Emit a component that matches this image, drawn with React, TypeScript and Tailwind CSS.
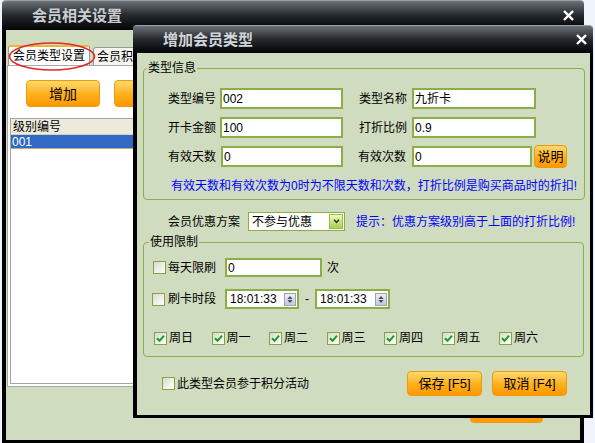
import React from 'react';

const weekDays = ['周日', '周一', '周二', '周三', '周四', '周五', '周六'];

function CloseIcon() {
  return (
    <svg viewBox="0 0 12 12" className="h-[11px] w-[11px]">
      <path d="M2 2 L10 10 M10 2 L2 10" stroke="#ffffff" strokeWidth="2.6" strokeLinecap="square" />
    </svg>
  );
}

function CheckBox({ checked }: { checked?: boolean }) {
  return (
    <span className="flex h-[13px] w-[13px] shrink-0 items-center justify-center border border-[#83a63c] bg-gradient-to-br from-[#d9d9d2] to-white">
      {checked && (
        <svg viewBox="0 0 9 9" className="h-[9px] w-[9px]">
          <path d="M1 4.2 L3.6 6.8 L8 1.6" stroke="#1f9a26" strokeWidth="2" fill="none" />
        </svg>
      )}
    </span>
  );
}

function TextBox({ value, className }: { value: string; className: string }) {
  return (
    <div className={`flex items-center border-2 border-[#8cae45] bg-white pl-[1px] ${className}`}>
      {value}
    </div>
  );
}

function TimeBox({ value, className }: { value: string; className: string }) {
  return (
    <div className={`flex h-[20px] items-center justify-between border-2 border-[#8cae45] bg-white pl-[3px] pr-[1px] ${className}`}>
      <span>{value}</span>
      <span className="flex h-[13px] w-[12px] flex-col items-center justify-center gap-[1px] border border-[#9ea0b4] bg-gradient-to-b from-[#eceef8] to-[#c4c8dc]">
        <svg viewBox="0 0 7 4" className="h-[3px] w-[6px]"><path d="M0 4 L3.5 0 L7 4 Z" fill="#4a4c5c" /></svg>
        <svg viewBox="0 0 7 4" className="h-[3px] w-[6px]"><path d="M0 0 L3.5 4 L7 0 Z" fill="#4a4c5c" /></svg>
      </span>
    </div>
  );
}

function OrangeButton({ children, className }: { children: React.ReactNode; className: string }) {
  return (
    <div className={`flex items-center justify-center rounded-[4px] border border-[#eb9c08] bg-gradient-to-b from-[#ffd96a] via-[#ffb21a] to-[#ff9700] text-black ${className}`}>
      {children}
    </div>
  );
}

export default function App() {
  return (
    <div className="relative h-[443px] w-[595px] overflow-hidden bg-[#eef4fa] font-['Liberation_Sans','Noto_Sans_CJK_SC',sans-serif] text-[12px] leading-[14px] text-black">
      {/* Outer window */}
      <div className="ml-[2px] flex h-[443px] w-[582px] flex-col">
        <div className="flex h-[30px] shrink-0 items-center justify-between rounded-t-[4px] border-t border-[#9aa0a6] bg-gradient-to-b from-[#6d7278] via-[#25292e] to-[#040506] pl-[30px] pr-[10px]">
          <span className="text-[15px] font-bold text-[#c9cdd1]">会员相关设置</span>
          <CloseIcon />
        </div>
        <div className="flex flex-1 flex-col border-x-4 border-b-[3px] border-black bg-[#d0dcbf] pt-[15px]">
          {/* tabs */}
          <div className="flex h-[20px] items-end pl-[2px]">
            <div className="flex h-[20px] items-center rounded-t-[3px] border border-b-0 border-[#919b9c] border-t-2 border-t-[#f2b233] bg-white px-[4px]">
              会员类型设置
            </div>
            <div className="ml-[3px] flex h-[18px] items-center rounded-t-[3px] border border-b-0 border-[#919b9c] bg-[#f6f5ef] px-[3px]">
              会员积分设置
            </div>
          </div>
          <div className="ml-[1px] flex h-[322px] flex-col border border-[#a8a8a8] bg-white pt-[14px]">
            <div className="flex gap-[14px] pl-[18px]">
              <OrangeButton className="h-[27px] w-[74px] text-[14px]">增加</OrangeButton>
              <OrangeButton className="h-[27px] w-[74px] text-[14px]">修改</OrangeButton>
            </div>
            <div className="mx-[2px] mb-[2px] mt-[11px] flex flex-1 flex-col border border-[#a5a5a5]">
              <div className="flex h-[16px] items-center border-b border-[#d6d2c2] bg-[#ebeadb] pl-[2px]">级别编号</div>
              <div className="flex h-[14px] items-center border-b border-[#c8a878] bg-[#316ac5] pl-[1px] text-white">001</div>
            </div>
          </div>
          <div className="mt-[11px] flex pl-[464px]">
            <OrangeButton className="h-[25px] w-[73px]">关闭</OrangeButton>
          </div>
        </div>
      </div>

      {/* red annotation ring */}
      <svg className="absolute left-[8px] top-[41px] h-[31px] w-[88px]" viewBox="0 0 88 31">
        <ellipse cx="44" cy="15.5" rx="42.5" ry="13.5" fill="none" stroke="#e0282c" strokeWidth="1.6" />
      </svg>

      {/* Dialog */}
      <div className="absolute left-[133px] top-[25px] flex h-[393px] w-[460px] flex-col">
        <div className="flex h-[28px] shrink-0 items-center justify-between rounded-t-[4px] border-t border-[#9aa0a6] bg-gradient-to-b from-[#6d7278] via-[#25292e] to-[#040506] pl-[30px] pr-[6px]">
          <span className="text-[15px] font-bold text-[#d2d6da]">增加会员类型</span>
          <CloseIcon />
        </div>
        <div className="flex flex-1 flex-col border-b-[3px] border-l-4 border-r-[3px] border-black bg-[#d0dcbf] pt-[7px]">
          <fieldset className="ml-[6px] mr-[5px] rounded-[4px] border border-[#8bb04a] pb-[6px]">
            <legend className="ml-[3px] px-[1px] leading-[16px]">类型信息</legend>
            <div className="mt-[12px] flex flex-col gap-[8px] pl-[24px]">
              <div className="flex h-[21px] items-center">
                <span className="w-[48px]">类型编号</span>
                <TextBox value="002" className="ml-[4px] h-[21px] w-[123px]" />
                <span className="ml-[16px] w-[48px]">类型名称</span>
                <TextBox value="九折卡" className="ml-[5px] h-[21px] w-[124px]" />
              </div>
              <div className="flex h-[21px] items-center">
                <span className="w-[48px]">开卡金额</span>
                <TextBox value="100" className="ml-[4px] h-[21px] w-[123px]" />
                <span className="ml-[16px] w-[48px]">打折比例</span>
                <TextBox value="0.9" className="ml-[5px] h-[21px] w-[124px]" />
              </div>
              <div className="flex h-[21px] items-center">
                <span className="w-[48px]">有效天数</span>
                <TextBox value="0" className="ml-[5px] h-[21px] w-[122px]" />
                <span className="ml-[15px] w-[48px]">有效次数</span>
                <TextBox value="0" className="ml-[6px] h-[21px] w-[120px]" />
                <OrangeButton className="ml-[2px] h-[23px] w-[33px] text-[13px]">说明</OrangeButton>
              </div>
            </div>
            <div className="mt-[12px] pl-[27px] text-[#0000ff]">
              有效天数和有效次数为0时为不限天数和次数，打折比例是购买商品时的折扣!
            </div>
          </fieldset>

          <div className="mt-[12px] flex h-[19px] items-center pl-[31px]">
            <span>会员优惠方案</span>
            <div className="ml-[8px] flex h-[19px] w-[97px] items-center justify-between border border-[#8cae45] bg-white pl-[3px] pr-[1px]">
              <span>不参与优惠</span>
              <span className="flex h-[15px] w-[14px] items-center justify-center border border-[#9cc04a] bg-gradient-to-b from-[#eefac0] to-[#a6d04a]">
                <svg viewBox="0 0 8 6" className="h-[5px] w-[7px]">
                  <path d="M1 1 L4 4 L7 1" stroke="#2d3a18" strokeWidth="1.8" fill="none" />
                </svg>
              </span>
            </div>
            <span className="ml-[11px] text-[#0000ff]">提示：优惠方案级别高于上面的打折比例!</span>
          </div>

          <fieldset className="ml-[6px] mr-[6px] mt-[3px] rounded-[4px] border border-[#8bb04a] pb-[11px]">
            <legend className="ml-[5px] px-[1px] leading-[16px]">使用限制</legend>
            <div className="mt-[8px] flex h-[19px] items-center pl-[9px]">
              <CheckBox />
              <span className="ml-[2px] w-[48px]">每天限刷</span>
              <TextBox value="0" className="ml-[9px] h-[19px] w-[97px]" />
              <span className="ml-[5px]">次</span>
            </div>
            <div className="mt-[12px] flex h-[20px] items-center pl-[8px]">
              <CheckBox />
              <span className="ml-[3px] w-[48px]">刷卡时段</span>
              <TimeBox value="18:01:33" className="ml-[9px] w-[74px]" />
              <span className="mx-[6px]">-</span>
              <TimeBox value="18:01:33" className="w-[75px]" />
            </div>
            <div className="mt-[22px] flex h-[14px] items-center pl-[10px]">
              {weekDays.map((day) => (
                <div key={day} className="flex w-[57.5px] items-center gap-[2px]">
                  <CheckBox checked />
                  <span>{day}</span>
                </div>
              ))}
            </div>
          </fieldset>

          <div className="mt-[14px] flex h-[25px] items-center pl-[25px] pr-[23px]">
            <CheckBox />
            <span className="ml-[2px]">此类型会员参于积分活动</span>
            <div className="ml-auto flex gap-[10px]">
              <OrangeButton className="h-[25px] w-[75px] text-[13px]">保存 [F5]</OrangeButton>
              <OrangeButton className="h-[25px] w-[75px] text-[13px]">取消 [F4]</OrangeButton>
            </div>
          </div>
        </div>
      </div>
    </div>
  );
}
